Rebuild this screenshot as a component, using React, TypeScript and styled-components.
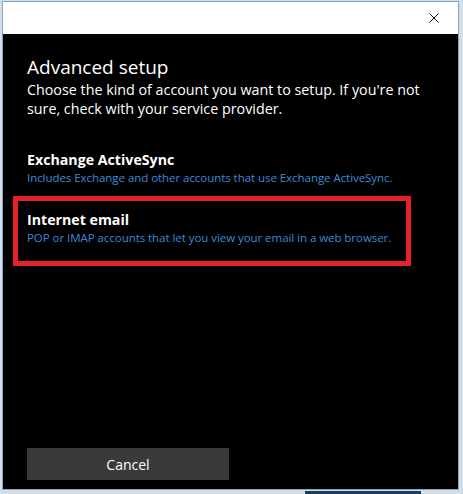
import { createGlobalStyle, styled } from "styled-components";

const GlobalStyle = createGlobalStyle`
    html, body {
        margin: 0;
        padding: 0;
        background-color: #d3dee6;
        width: 463px;
        height: 494px;
        overflow: hidden;
    }
    * {
        box-sizing: border-box;
    }
`;

const Window = styled.div`
    margin: 1px 0 0 2px;
    width: 457px;
    height: 489px;
    border: 1px solid #7fa6c6;
    display: flex;
    flex-direction: column;
    background-color: black;
    font-family: "Open Sans", "Noto Sans", sans-serif;
`;

const TitleBar = styled.div`
    height: 32px;
    background-color: white;
    display: flex;
    justify-content: flex-end;
    align-items: center;
    flex-shrink: 0;
`;

const CloseButton = styled.button`
    width: 46px;
    height: 32px;
    border: none;
    background: transparent;
    display: flex;
    align-items: center;
    justify-content: center;
    padding: 0;
    margin-right: 1px;
    cursor: pointer;
`;

const Content = styled.div`
    flex: 1;
    display: flex;
    flex-direction: column;
    padding: 20px 24px 0 24px;
    color: white;
`;

const Heading = styled.h1`
    margin: 0;
    font-size: 19px;
    font-weight: 400;
    line-height: 26px;
`;

const Intro = styled.p`
    margin: 0;
    font-size: 14.3px;
    line-height: 19px;
`;

const OptionList = styled.div`
    display: flex;
    flex-direction: column;
    gap: 10px;
    margin-top: 32px;
    margin-left: -14px;
    width: 398px;
`;

const Option = styled.div<{ $selected?: boolean }>`
    padding: ${(p) => (p.$selected ? "9px 9px 15px 9px" : "0 14px")};
    border: ${(p) => (p.$selected ? "5px solid #e4202b" : "none")};
    cursor: pointer;
`;

const OptionTitle = styled.div`
    font-size: 14.2px;
    font-weight: 700;
    line-height: 19px;
`;

const OptionText = styled.div`
    font-size: 11.5px;
    line-height: 17px;
    color: #3b8ad6;
    letter-spacing: -0.05px;
`;

const Footer = styled.div`
    display: flex;
    padding: 0 0 9px 24px;
`;

const CancelButton = styled.button`
    width: 202px;
    height: 32px;
    background-color: #3a3a3a;
    color: white;
    border: none;
    font-family: inherit;
    font-size: 14px;
    cursor: pointer;
    &:hover {
        background-color: #4a4a4a;
    }
`;

const Taskbar = styled.div`
    display: flex;
    padding-left: 305px;
    margin-top: 1px;
`;

const TaskbarItem = styled.div`
    width: 116px;
    height: 3px;
    background-color: #1d3b5f;
`;

export default function App() {
    return (
        <>
            <GlobalStyle />
            <Window>
                <TitleBar>
                    <CloseButton aria-label="Close">
                        <svg width="10" height="10" viewBox="0 0 10 10">
                            <path d="M0.5 0.5 L9.5 9.5 M9.5 0.5 L0.5 9.5" stroke="#111" strokeWidth="1" />
                        </svg>
                    </CloseButton>
                </TitleBar>
                <Content>
                    <Heading>Advanced setup</Heading>
                    <Intro>
                        Choose the kind of account you want to setup. If you're not sure, check with your service provider.
                    </Intro>
                    <OptionList>
                        <Option>
                            <OptionTitle>Exchange ActiveSync</OptionTitle>
                            <OptionText>Includes Exchange and other accounts that use Exchange ActiveSync.</OptionText>
                        </Option>
                        <Option $selected>
                            <OptionTitle>Internet email</OptionTitle>
                            <OptionText>POP or IMAP accounts that let you view your email in a web browser.</OptionText>
                        </Option>
                    </OptionList>
                </Content>
                <Footer>
                    <CancelButton>Cancel</CancelButton>
                </Footer>
            </Window>
            <Taskbar>
                <TaskbarItem />
            </Taskbar>
        </>
    );
}
